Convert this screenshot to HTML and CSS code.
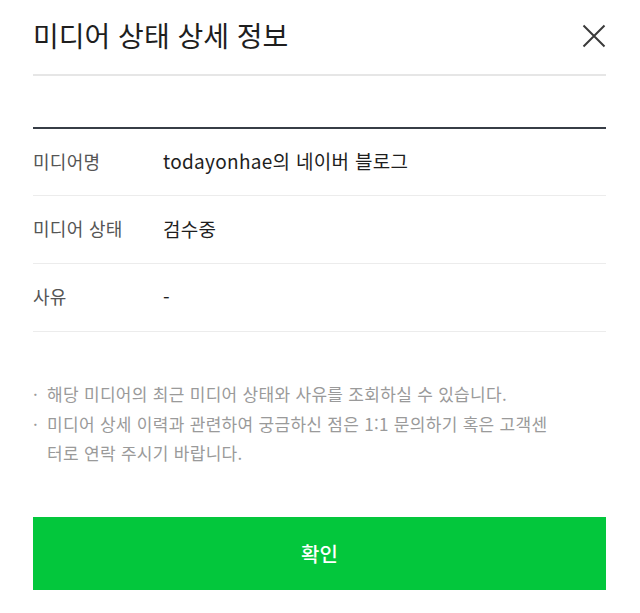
FILE: index.html
```html
<!DOCTYPE html>
<html lang="ko">
<head>
<meta charset="utf-8">
<title>미디어 상태 상세 정보</title>
<link rel="stylesheet" href="styles.css">
</head>
<body>
<div class="modal">
  <div class="header">
    <h1 class="title">미디어 상태 상세 정보</h1>
    <button class="close" aria-label="닫기">
      <svg width="24" height="24" viewBox="0 0 24 24"><path d="M1.5 1.5 L22.5 22.5 M22.5 1.5 L1.5 22.5" stroke="#3a3a3a" stroke-width="2" fill="none"/></svg>
    </button>
  </div>
  <div class="table">
    <div class="row"><div class="label">미디어명</div><div class="value">todayonhae의 네이버 블로그</div></div>
    <div class="row"><div class="label">미디어 상태</div><div class="value">검수중</div></div>
    <div class="row"><div class="label">사유</div><div class="value">-</div></div>
  </div>
  <ul class="notes">
    <li>해당 미디어의 최근 미디어 상태와 사유를 조회하실 수 있습니다.</li>
    <li>미디어 상세 이력과 관련하여 궁금하신 점은 1:1 문의하기 혹은 고객센터로 연락 주시기 바랍니다.</li>
  </ul>
  <button class="confirm">확인</button>
</div>
</body>
</html>
```
FILE: styles.css
```css
* { box-sizing: border-box; }
html, body { margin: 0; padding: 0; background: #fff; }
body {
  font-family: "Noto Sans CJK KR", "Noto Sans", sans-serif;
  color: #222;
}
.modal {
  padding: 0 34px 0 33px;
}
.header {
  display: flex;
  justify-content: space-between;
  align-items: center;
  height: 76px;
  padding-bottom: 5px;
  border-bottom: 2px solid #e6e6e6;
}
.title {
  margin: 0;
  font-size: 28px;
  font-weight: 400;
  letter-spacing: 0;
  color: #1e1e1e;
  line-height: 40px;
}
.close {
  border: 0;
  background: none;
  padding: 0;
  width: 24px;
  height: 24px;
  margin-right: 0;
  margin-top: 3px;
  cursor: pointer;
}
.close svg { display: block; }
.table {
  margin-top: 51px;
  border-top: 2px solid #373d46;
}
.row {
  display: flex;
  align-items: center;
  height: 68px;
  padding-bottom: 3px;
  border-bottom: 1px solid #ececec;
}
.row:first-child { height: 67px; }
.label {
  width: 130px;
  flex: none;
  font-size: 18px;
  color: #555;
  letter-spacing: 0.3px;
}
.value {
  font-size: 19px;
  color: #1e1e1e;
  letter-spacing: 0.3px;
}
.notes {
  list-style: none;
  margin: 47px 0 0;
  padding: 0;
  width: 528px;
  font-size: 17px;
  line-height: 29.5px;
  color: #9a9a9a;
  letter-spacing: 0.3px;
}
.notes li {
  position: relative;
  padding-left: 14px;
}
.notes li::before {
  content: "·";
  position: absolute;
  left: 0;
  top: 0;
}
.confirm {
  display: block;
  width: 100%;
  height: 73px;
  margin-top: 49px;
  border: 0;
  background: #03c73c;
  color: #fff;
  font-family: "Noto Sans CJK KR", "Noto Sans", sans-serif;
  font-size: 20px;
  font-weight: 500;
}
```
